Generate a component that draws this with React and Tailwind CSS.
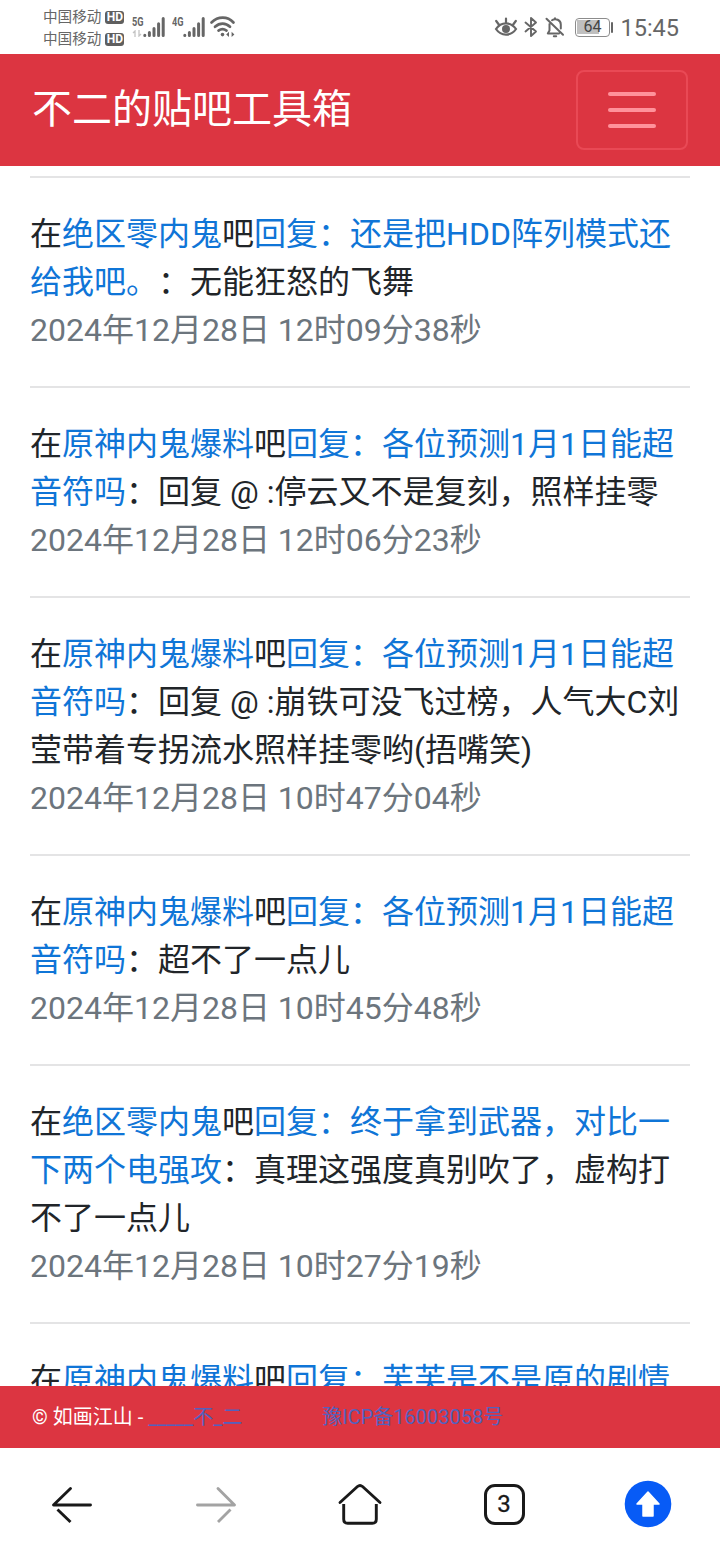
import React from 'react';

const replies = [
  {
    forum: '绝区零内鬼',
    title: '回复：还是把HDD阵列模式还给我吧。',
    content: '无能狂怒的飞舞',
    time: '2024年12月28日 12时09分38秒',
  },
  {
    forum: '原神内鬼爆料',
    title: '回复：各位预测1月1日能超音符吗',
    content: '回复 @ :停云又不是复刻，照样挂零',
    time: '2024年12月28日 12时06分23秒',
  },
  {
    forum: '原神内鬼爆料',
    title: '回复：各位预测1月1日能超音符吗',
    content: '回复 @ :崩铁可没飞过榜，人气大C刘莹带着专拐流水照样挂零哟(捂嘴笑)',
    time: '2024年12月28日 10时47分04秒',
  },
  {
    forum: '原神内鬼爆料',
    title: '回复：各位预测1月1日能超音符吗',
    content: '超不了一点儿',
    time: '2024年12月28日 10时45分48秒',
  },
  {
    forum: '绝区零内鬼',
    title: '回复：终于拿到武器，对比一下两个电强攻',
    content: '真理这强度真别吹了，虚构打不了一点儿',
    time: '2024年12月28日 10时27分19秒',
  },
  {
    forum: '原神内鬼爆料',
    title: '回复：芙芙是不是原的剧情',
    content: '',
    time: '',
  },
];

const Carrier = () => (
  <div className="flex h-[22px] items-center gap-1">
    <span className="text-[14.6px] leading-[22px]">中国移动</span>
    <span className="flex h-[13px] w-[19px] items-center justify-center rounded-[3px] bg-[#5f5f5f] font-['Roboto'] text-[12px] leading-none font-bold text-white">
      HD
    </span>
  </div>
);

const Signal = ({ label, inactive }) => (
  <div className="relative h-6 w-[34px]">
    <span className="absolute top-[-1px] left-0 origin-left scale-x-[0.68] font-['Roboto'] text-[13.5px] leading-[13px] font-bold">
      {label}
    </span>
    {inactive && (
      <svg className="absolute top-[14px] left-0 h-[7px] w-[10px]" viewBox="0 0 10 7" fill="none" stroke="#c4c4c4" strokeWidth="1.3">
        <path d="M1 3l2-2v6M9 4L7 6V0" />
      </svg>
    )}
    <svg className="absolute top-0 left-[11px] h-[22px] w-[23px]" viewBox="0 0 23 22" fill="none" stroke="#666" strokeWidth="3" strokeLinecap="round">
      <path d="M1.8 19.6v-.4M6.4 19.6v-3M11 19.6v-7M15.6 19.6V7.8M20.2 19.6V2.5" />
    </svg>
  </div>
);

const StatusBar = () => (
  <div className="flex h-[54px] shrink-0 items-start justify-between bg-white pr-[41px] pl-[43px] text-[#666]">
    <div className="flex">
      <div className="flex w-[89px] flex-col pt-[6px]">
        <Carrier />
        <Carrier />
      </div>
      <div className="flex gap-[6px] pt-4">
        <Signal label="5G" inactive />
        <Signal label="4G" />
      </div>
      <svg className="mt-[14px] ml-[3px] h-6 w-[27px]" viewBox="0 0 27 24" fill="none" stroke="#666" strokeWidth="2.7" strokeLinecap="round">
        <path d="M2.5 8.5c6.5-6.5 16-6.5 22 0M6 12.8c4.7-4.2 10.7-4.2 15 0M9.5 16.6c2.6-1.8 5.4-1.8 8 0" />
        <circle cx="13.5" cy="20.6" r="1.8" fill="#666" stroke="none" />
        <path d="M20 17.8L17.2 20.4 20 23zM22.6 17.8l2.8 2.6-2.8 2.6z" fill="#666" stroke="none" />
      </svg>
    </div>
    <div className="flex h-[54px] items-center">
      <svg className="mr-[6px] h-[22px] w-6" viewBox="0 0 24 22" fill="none" stroke="#666" strokeWidth="2.2" strokeLinecap="round">
        <path d="M2 13C7 5.5 17 5.5 22 13c-5 7.5-15 7.5-20 0z" />
        <circle cx="12" cy="13" r="4" fill="#666" stroke="none" />
        <path d="M2.2 5l2.6 3.5M12 2.5v4M21.8 5l-2.6 3.5" />
      </svg>
      <svg className="mr-[7px] h-[22px] w-[14px]" viewBox="0 0 14 22" fill="none" stroke="#666" strokeWidth="1.9" strokeLinejoin="round" strokeLinecap="round">
        <path d="M1.5 6.5l10.5 9-5 4.5V2l5 4.5-10.5 9" />
      </svg>
      <svg className="mr-2.5 h-[22px] w-5" viewBox="0 0 20 22" fill="none" stroke="#666" strokeWidth="2" strokeLinecap="round" strokeLinejoin="round">
        <path d="M4.5 8v6.5L2.8 17.5H14M7 4.2c3.5-2.4 8.8-.2 8.8 4.3v4M10 2.2v1M8.8 20.2h2.4M1.5 2.8l16.5 16" />
      </svg>
      <div className="flex h-[19px] w-[35px] rounded-[4px] border-[1.5px] border-[#8c8c8c] p-[1.5px]">
        <div className="flex w-full items-center justify-center bg-linear-to-r from-[#c0c0c0] from-74% to-white to-74% font-['Roboto'] text-[16px] leading-none text-[#444]">
          64
        </div>
      </div>
      <div className="ml-[1px] h-[11px] w-[2.5px] rounded-sm bg-[#666]" />
      <span className="mt-[3px] ml-[7px] font-['Roboto'] text-[23.5px] leading-none">15:45</span>
    </div>
  </div>
);

const Header = () => (
  <header className="flex h-28 shrink-0 items-center justify-between bg-[#dc3541] px-8">
    <a className="text-[40px] leading-[60px] text-white">不二的贴吧工具箱</a>
    <button
      className="flex h-20 w-28 flex-col items-center justify-center gap-3 rounded-lg border-2 border-[#e94955]"
      aria-label="Toggle navigation"
    >
      <span className="h-1 w-12 rounded-xs bg-[#ff929b]" />
      <span className="h-1 w-12 rounded-xs bg-[#ff929b]" />
      <span className="h-1 w-12 rounded-xs bg-[#ff929b]" />
    </button>
  </header>
);

const Reply = ({ forum, title, content, time }) => (
  <article className="border-t-2 border-[#e4e4e5] py-8 text-[32px] leading-[48px] text-[#212529]">
    <p>
      在<a className="text-[#0f75d7]">{forum}</a>吧<a className="text-[#0f75d7]">{title}</a>
      {content && `：${content}`}
    </p>
    <p className="text-[#6c757d]">{time}</p>
  </article>
);

const Footer = () => (
  <footer className="flex h-[62px] shrink-0 items-center bg-[#dc3541] px-8 text-[20px] leading-[30px] whitespace-pre text-white">
    <span>© 如画江山 - </span>
    <a className="text-[#5361bd]">_____不_二</a>
    <a className="ml-[80px] text-[#5361bd]">豫ICP备16003058号</a>
  </footer>
);

const BottomNav = () => (
  <nav className="grid h-28 shrink-0 grid-cols-5 items-center justify-items-center bg-white">
    <svg className="h-12 w-12" viewBox="0 0 48 48" fill="none" stroke="#191919" strokeWidth="2.9" strokeLinecap="round">
      <path d="M42.5 25H5.5L22.5 8.5" strokeLinejoin="round" />
      <path d="M9.5 29.5l13 12.5" strokeLinecap="butt" />
    </svg>
    <svg className="h-12 w-12" viewBox="0 0 48 48" fill="none" stroke="#a3a3a3" strokeWidth="2.9" strokeLinecap="round">
      <path d="M5.5 25h37L26 8.5" strokeLinejoin="round" />
      <path d="M38.5 29.5L26 42" strokeLinecap="butt" />
    </svg>
    <svg className="h-12 w-12" viewBox="0 0 48 48" fill="none" stroke="#191919" strokeWidth="2.9" strokeLinecap="round" strokeLinejoin="round">
      <path d="M4 22.5L21.5 6.5q2.5-2.2 5 0L44 22.5" />
      <path d="M7.7 24v15.3q0 4 4 4h24.6q4 0 4-4V24" strokeLinecap="butt" />
    </svg>
    <div className="flex h-[41px] w-[41px] items-center justify-center rounded-[11px] border-3 border-[#191919] pb-px font-['Roboto'] text-[24px] leading-none text-[#191919] [-webkit-text-stroke:0.3px]">
      3
    </div>
    <svg className="h-12 w-12" viewBox="0 0 48 48">
      <circle cx="24" cy="24" r="23.3" fill="#075bf6" />
      <path
        d="M24 12L35 24H29v12H19V24H13z"
        fill="#fff"
        stroke="#fff"
        strokeWidth="1.5"
        strokeLinejoin="round"
      />
    </svg>
  </nav>
);

const App = () => {
  return (
    <div
      lang="zh-CN"
      className="flex h-[1560px] w-[720px] flex-col overflow-hidden bg-white font-['Roboto','Noto_Sans_CJK_SC',sans-serif] [text-spacing-trim:space-all]"
    >
      <StatusBar />
      <Header />
      <main className="min-h-0 flex-1 overflow-hidden px-[30px] pt-[10px]">
        {replies.map((reply, index) => (
          <Reply key={index} {...reply} />
        ))}
      </main>
      <Footer />
      <BottomNav />
    </div>
  );
};

export default App;
